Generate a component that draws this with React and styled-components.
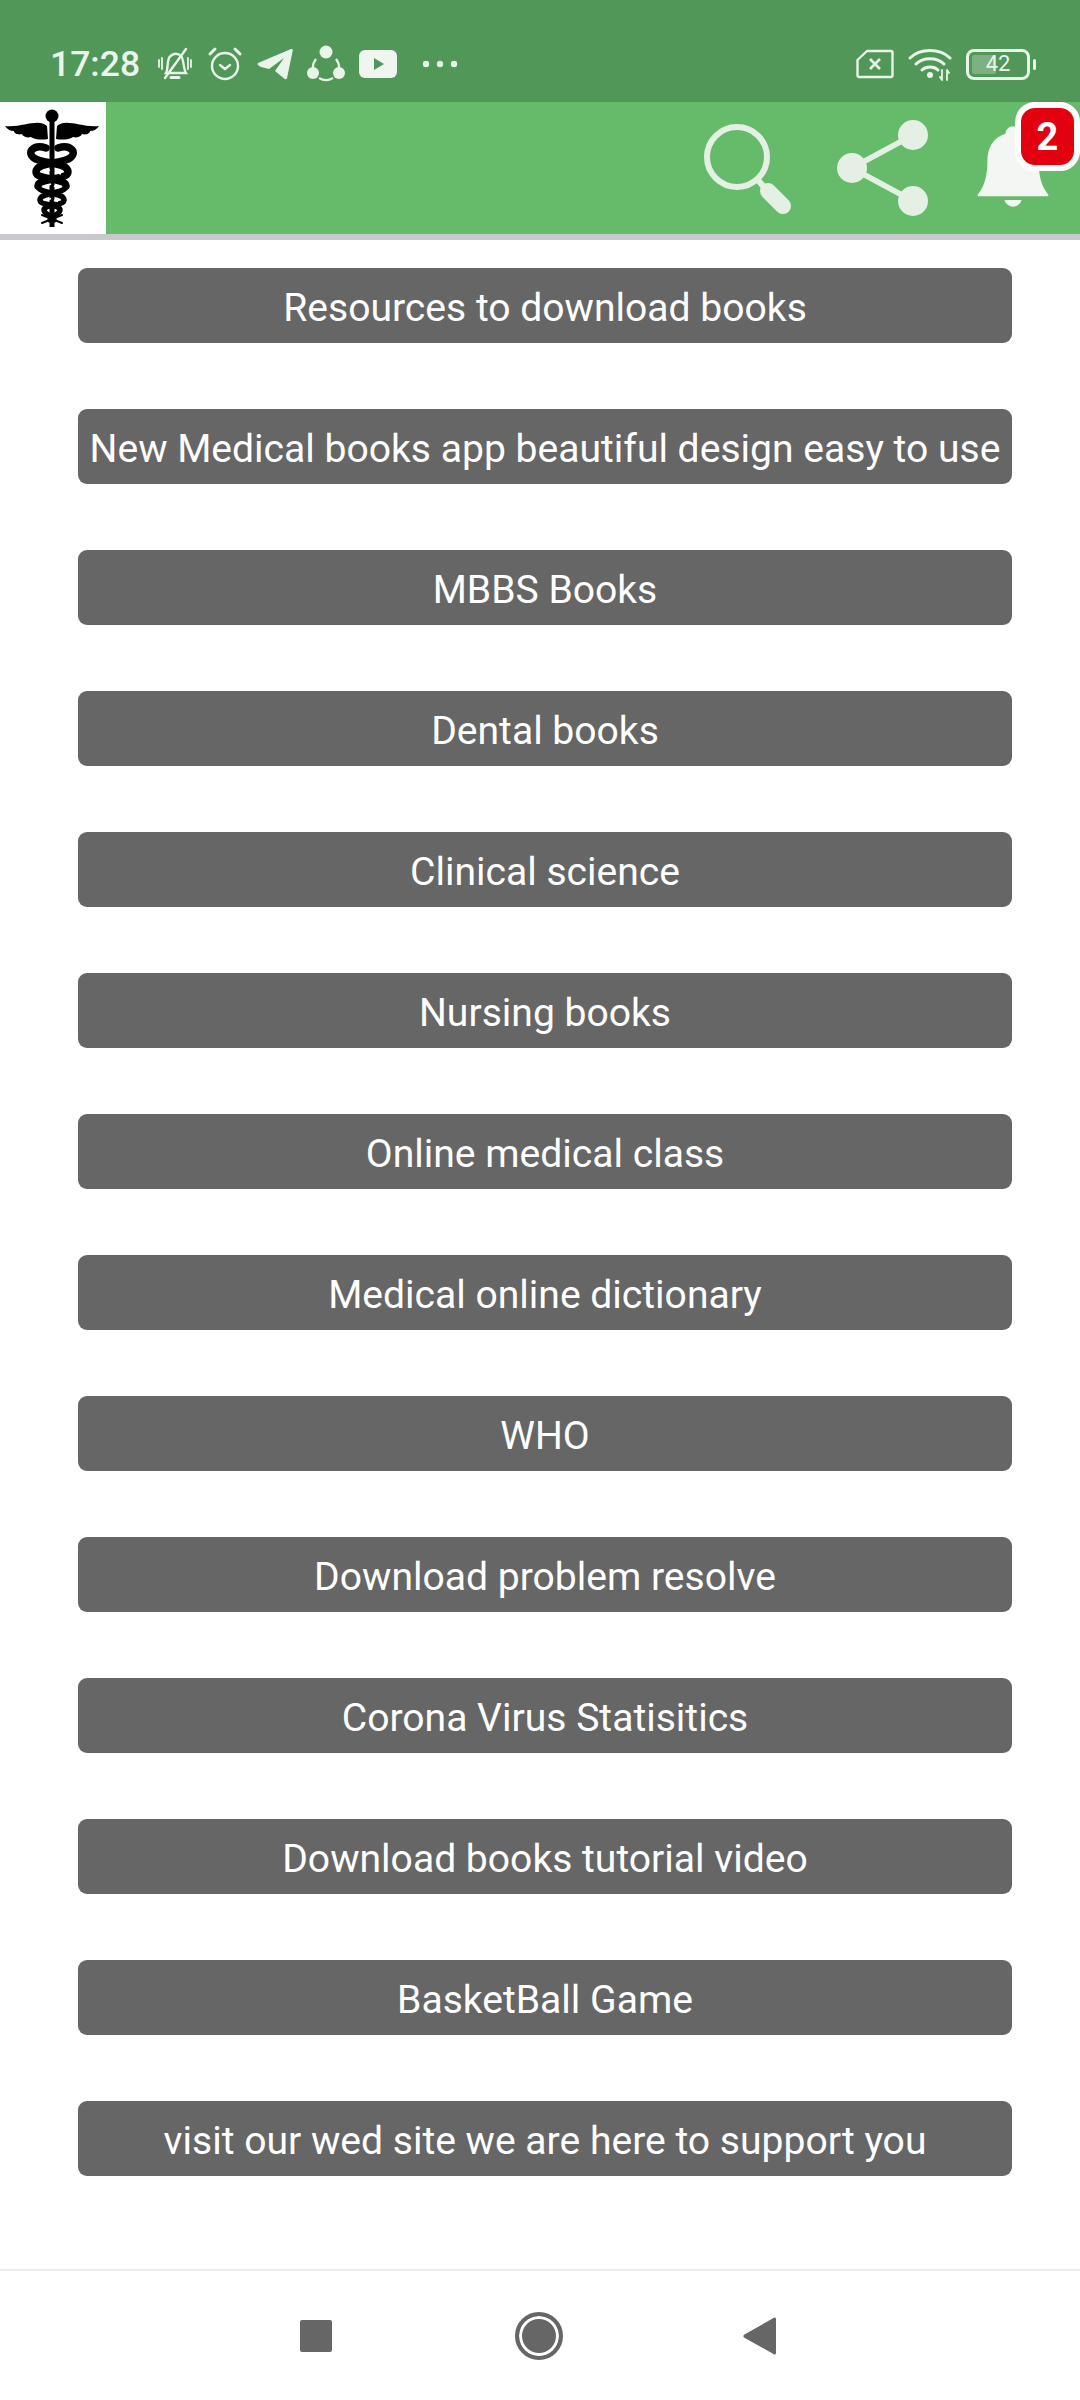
import styled, { createGlobalStyle } from 'styled-components';

const menuItems = [
  'Resources to download books',
  'New Medical books app beautiful design easy to use',
  'MBBS Books',
  'Dental books',
  'Clinical science',
  'Nursing books',
  'Online medical class',
  'Medical online dictionary',
  'WHO',
  'Download problem resolve',
  'Corona Virus Statisitics',
  'Download books tutorial video',
  'BasketBall Game',
  'visit our wed site we are here to support you',
];

const STATUS = '#e9f4ea';

const MutedBellIcon = () => (
  <svg width="36" height="36" viewBox="0 0 36 36" fill="none" stroke={STATUS} strokeWidth="2.400" strokeLinecap="round">
    <path d="M9 27c2-3 1-10 3-15 2-4 8-6 12-2 3 3 2 12 5 17z" />
    <path d="M14 31.500h8" strokeWidth="3" />
    <path d="M8 32L29 3" />
    <path d="M2 14v7M5 12v11M31 12v11M34 14v7" strokeWidth="1.800" />
  </svg>
);

const AlarmIcon = () => (
  <svg width="36" height="36" viewBox="0 0 36 36" fill="none" stroke={STATUS} strokeWidth="2.400" strokeLinecap="round" strokeLinejoin="round">
    <circle cx="18" cy="20" r="13" />
    <path d="M13 19l5 4 5-4" />
    <path d="M3 8l5-5M33 8l-5-5" strokeWidth="3" />
  </svg>
);

const TelegramIcon = () => (
  <svg width="36" height="32" viewBox="0 0 36 32" fill={STATUS}>
    <path d="M1 15L34 1c1-.4 2 .4 1.800 1.500L30 30c-.3 1.300-1.600 1.600-2.600.8L18 23l9-13-15 11-8-2c-3-1-4-3-3-4z" />
  </svg>
);

const ShareItIcon = () => (
  <svg width="38" height="38" viewBox="0 0 38 38">
    <path d="M9 14A14 14 0 0 0 6 24M12 33a14 14 0 0 0 14 0M29 14a14 14 0 0 1 3 10" fill="none" stroke={STATUS} strokeWidth="2.200" />
    <circle cx="19" cy="7" r="6.500" fill={STATUS} />
    <circle cx="6" cy="28" r="6" fill={STATUS} />
    <circle cx="32" cy="28" r="6" fill={STATUS} />
  </svg>
);

const YoutubeIcon = () => (
  <svg width="38" height="28" viewBox="0 0 38 28">
    <rect width="38" height="28" rx="6" fill="#f0f5f0" />
    <path d="M15 8l10 6-10 6z" fill="#519758" />
  </svg>
);

const DotsIcon = () => (
  <svg width="36" height="8" viewBox="0 0 36 8" fill={STATUS}>
    <circle cx="4" cy="4" r="3.200" />
    <circle cx="18" cy="4" r="3.200" />
    <circle cx="32" cy="4" r="3.200" />
  </svg>
);

const SimIcon = () => (
  <svg width="38" height="30" viewBox="0 0 38 30" fill="none" stroke={STATUS} strokeWidth="2.400" strokeLinejoin="round">
    <path d="M11 2h24a1.500 1.500 0 0 1 1.500 1.500v23a1.500 1.500 0 0 1-1.500 1.500H3a1.500 1.500 0 0 1-1.500-1.500V11z" />
    <path d="M14 10l10 10M24 10L14 20" strokeWidth="2.600" />
  </svg>
);

const WifiIcon = () => (
  <svg width="44" height="34" viewBox="0 0 44 34" fill="none" stroke={STATUS} strokeLinecap="round">
    <path d="M2 11c10-10 30-10 40 0M8 17c7-7 21-7 28 0M14 23c4-4 12-4 16 0" strokeWidth="3" />
    <circle cx="22" cy="28" r="3" fill={STATUS} stroke="none" />
    <path d="M34 23v10M34 33l-2-3M39 23v10M39 23l2 3" strokeWidth="1.800" />
  </svg>
);

const SearchIcon = () => (
  <svg width="92" height="92" viewBox="0 0 92 92" fill="none" strokeLinecap="round">
    <circle cx="34" cy="35" r="30" stroke="#e4f0e4" strokeWidth="6" />
    <path d="M55 58l5 6" stroke="#e4f0e4" strokeWidth="6" />
    <path d="M65 69l15 15" stroke="#e4f0e4" strokeWidth="16" />
  </svg>
);

const ShareIcon = () => (
  <svg width="92" height="96" viewBox="0 0 92 96">
    <path d="M15 48L76 15M15 48l61 33" stroke="#e4f0e4" strokeWidth="5.500" fill="none" />
    <circle cx="15" cy="48" r="15" fill="#e4f0e4" />
    <circle cx="76" cy="15" r="15" fill="#e4f0e4" />
    <circle cx="76" cy="81" r="15" fill="#e4f0e4" />
  </svg>
);

const BellIcon = () => (
  <svg width="72" height="86" viewBox="0 0 76 90" fill="#f4f6f4">
    <path d="M30 12a8 8 0 0 1 16 0c13 4 19 15 19 28 0 14 2 26 10 36 .6 .8 .2 2-1 2H2c-1.200 0-1.600-1.200-1-2 8-10 10-22 10-36 0-13 6-24 19-28z" />
    <path d="M29 82h18c-1 4-5 7-9 7s-8-3-9-7z" />
  </svg>
);

const CaduceusLogo = () => (
  <svg width="106" height="132" viewBox="0 0 106 132">
    <circle cx="52" cy="14" r="6.500" fill="#000" />
    <rect x="49.500" y="18" width="5" height="107" fill="#000" />
    <path d="M47 24C38 16 22 26 5 24c2 3 5 5 9 5 0 3 5 4 8 3 1 3 6 4 9 3 4 3 12 3 17 2z" fill="#000" />
    <path d="M57 24c9-8 25 2 42 0-2 3-5 5-9 5 0 3-5 4-8 3-1 3-6 4-9 3-4 3-12 3-17 2z" fill="#000" />
    <g fill="none" stroke="#000" strokeLinecap="round">
      <path d="M58 46C70 42 78 50 70 56C62 62 36 60 36 70C36 78 66 76 66 84" strokeWidth="7.500" />
      <path d="M46 46C34 42 26 50 34 56C42 62 68 60 68 70C68 78 38 76 38 84" strokeWidth="7.500" />
      <path d="M66 84C66 92 40 90 40 98C40 104 60 102 60 108C60 112 52 114 50 118" strokeWidth="5.500" />
      <path d="M38 84C38 92 64 90 64 98C64 104 44 102 44 108C44 112 52 114 54 118" strokeWidth="5.500" />
      <path d="M42 113l20 8M62 113l-20 8" strokeWidth="2" />
    </g>
    <path d="M44 70l6-2M55 70l6 2M46 84l5-2M54 84l5 2M47 98l4-1.500M54 98l4 1.500" fill="none" stroke="#fff" strokeWidth="1.800" />
  </svg>
);

const GlobalStyle = createGlobalStyle`
  html, body {
    margin: 0;
    padding: 0;
    background: #ffffff;
  }
  * {
    box-sizing: border-box;
  }
`;

const Page = styled.div`
  display: flex;
  flex-direction: column;
  width: 1080px;
  height: 2400px;
  font-family: Roboto, "Noto Sans", sans-serif;
  background: #ffffff;
`;

const StatusBar = styled.div`
  display: flex;
  align-items: center;
  justify-content: space-between;
  height: 102px;
  padding: 26px 50px 0 50px;
  background: #519758;
`;

const StatusGroup = styled.div`
  display: flex;
  align-items: center;
  gap: 14px;
`;

const Clock = styled.span`
  margin-right: 3px;
  color: ${STATUS};
  font-size: 35.500px;
  font-weight: 500;
`;

const DotsWrap = styled.span`
  display: flex;
  margin-left: 11px;
`;

const Battery = styled.div`
  position: relative;
  display: flex;
  align-items: center;
  justify-content: center;
  width: 64px;
  height: 31px;
  border: 3px solid ${STATUS};
  border-radius: 8px;
  color: ${STATUS};
  font-size: 22px;
  line-height: 1;
  &::before {
    content: '';
    position: absolute;
    top: 3px;
    bottom: 3px;
    left: 3px;
    width: 24px;
    border-radius: 2px;
    background: rgba(255, 255, 255, 0.25);
  }
  &::after {
    content: '';
    position: absolute;
    top: 7px;
    right: -9px;
    width: 3px;
    height: 11px;
    border-radius: 2px;
    background: ${STATUS};
  }
`;

const BatteryLevel = styled.span`
  position: relative;
`;

const AppBar = styled.header`
  display: flex;
  align-items: center;
  justify-content: space-between;
  height: 138px;
  border-bottom: 6px solid #c9c9cd;
  background: #66bb6a;
`;

const LogoBox = styled.div`
  display: flex;
  width: 106px;
  height: 132px;
  background: #ffffff;
`;

const AppActions = styled.div`
  display: flex;
  align-items: center;
  gap: 42px;
  padding-right: 31px;
`;

const BellWrap = styled.div`
  position: relative;
  display: flex;
  margin: 0 0 6px 6px;
`;

const Badge = styled.span`
  position: absolute;
  top: -20px;
  left: 38px;
  display: flex;
  align-items: center;
  justify-content: center;
  width: 65px;
  height: 69px;
  border: 6px solid #ffffff;
  border-radius: 20px;
  background: #e3000f;
  color: #ffffff;
  font-size: 38px;
  font-weight: 700;
`;

const MenuList = styled.main`
  display: flex;
  flex: 1;
  flex-direction: column;
  gap: 66px;
  padding: 28px 68px 0 78px;
`;

const MenuButton = styled.button`
  display: block;
  width: 100%;
  height: 75px;
  padding: 4px 0 0;
  border: 0;
  border-radius: 9px;
  background: #666666;
  color: #ffffff;
  font-family: inherit;
  font-size: 39.100px;
  white-space: nowrap;
`;

const NavBar = styled.nav`
  display: flex;
  align-items: center;
  justify-content: center;
  gap: 180px;
  height: 131px;
  padding-right: 3px;
  border-top: 2px solid #ececec;
`;

const NavSquare = styled.span`
  width: 32px;
  height: 32px;
  margin-right: 3px;
  border-radius: 2px;
  background: #666666;
`;

const NavCircle = styled.span`
  width: 48px;
  height: 48px;
  border: 4px solid #666666;
  border-radius: 50%;
  background: #666666;
  box-shadow: inset 0 0 0 3px #ffffff;
`;

const NavBack = () => (
  <svg width="34" height="38" viewBox="0 0 34 38" fill="#666666">
    <path d="M33 2v34c0 1.500-1.500 2-2.500 1L1 20.500c-.8-.8-.8-2 0-2.800L30.500 1C31.500 0 33 .5 33 2z" />
  </svg>
);

export default function App() {
  return (
    <Page>
      <GlobalStyle />
      <StatusBar>
        <StatusGroup>
          <Clock>17:28</Clock>
          <MutedBellIcon />
          <AlarmIcon />
          <TelegramIcon />
          <ShareItIcon />
          <YoutubeIcon />
          <DotsWrap>
            <DotsIcon />
          </DotsWrap>
        </StatusGroup>
        <StatusGroup>
          <SimIcon />
          <WifiIcon />
          <Battery>
            <BatteryLevel>42</BatteryLevel>
          </Battery>
        </StatusGroup>
      </StatusBar>
      <AppBar>
        <LogoBox>
          <CaduceusLogo />
        </LogoBox>
        <AppActions>
          <SearchIcon />
          <ShareIcon />
          <BellWrap>
            <BellIcon />
            <Badge>2</Badge>
          </BellWrap>
        </AppActions>
      </AppBar>
      <MenuList>
        {menuItems.map(item => (
          <MenuButton key={item}>{item}</MenuButton>
        ))}
      </MenuList>
      <NavBar>
        <NavSquare />
        <NavCircle />
        <NavBack />
      </NavBar>
    </Page>
  );
}
